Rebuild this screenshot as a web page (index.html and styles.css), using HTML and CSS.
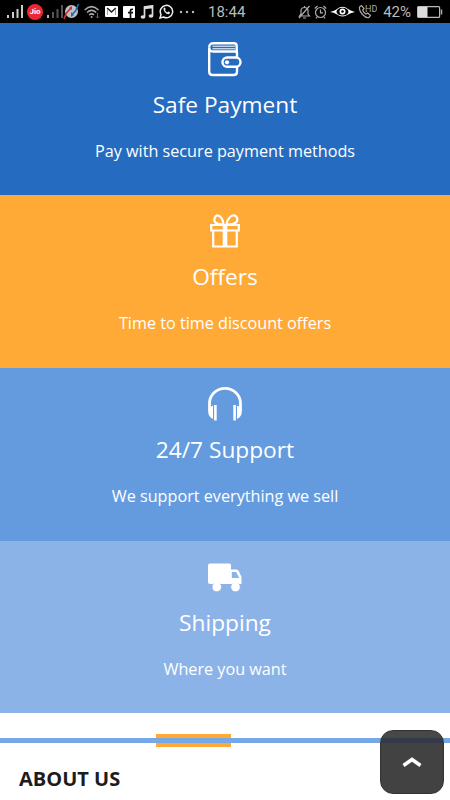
FILE: index.html
```html
<!DOCTYPE html>
<html lang="en">
<head>
    <meta charset="UTF-8">
    <meta name="viewport" content="width=device-width, initial-scale=1.0">
    <title>About Us</title>
    <link rel="stylesheet" href="styles.css">
</head>
<body>
    <header class="status-bar">
        <div class="status-left">
            <svg class="signal" width="17" height="13" viewBox="0 0 17 13"><path fill="#ccc" d="M0 10h2v3H0zM5 7h2v6H5zM9.500 4h2v9h-2zM14 0h2v13h-2z"/></svg>
            <span class="carrier">Jio</span>
            <svg class="signal" width="17" height="13" viewBox="0 0 17 13"><path fill="#bbb" d="M0 10h2v3H0z"/><path fill="#555" d="M5 7h2v6H5zM9.500 4h2v9h-2zM14 0h2v13h-2z"/></svg>
            <svg class="compass" width="17" height="17" viewBox="0 0 17 17"><circle cx="8.500" cy="8.500" r="6.500" fill="#bdc1c4"/><path d="M1 16l2.500-6L8 5" fill="none" stroke="#d82b2b" stroke-width="1.600"/><path d="M6 5l3-2v4z" fill="#d82b2b"/><path d="M8.500 12l4-4L15.500 1" fill="none" stroke="#2667ad" stroke-width="1.600"/><path d="M8 9v5l3-2z" fill="#2667ad"/></svg>
            <svg width="16" height="14" viewBox="0 0 16 14" fill="none" stroke="#aaa" stroke-width="1.500"><path d="M.7 5Q7.500-1.800 14.500 5M3 7.500q4.500-4.300 9.200 0M5.200 10q2.400-2.200 4.800 0"/><circle cx="7.600" cy="12" r="1" fill="#aaa" stroke="none"/><path d="M13.500 8v5M12 11.500l1.500 1.500 1.500-1.500" stroke="#666" stroke-width="1"/></svg>
            <svg width="13" height="11" viewBox="0 0 13 11"><rect width="13" height="11" rx="1" fill="#fff"/><path d="M2.200 2L6.500 6 10.800 2" fill="none" stroke="#222" stroke-width="1.500"/><path d="M2.500 9V3M10.500 9V3" stroke="#888" stroke-width=".8"/></svg>
            <svg width="12" height="12" viewBox="0 0 12 12"><rect width="12" height="12" rx="1" fill="#fff"/><path d="M7.500 12V5q0-2 2.500-1.700M5 6.700h5" fill="none" stroke="#111" stroke-width="1.700"/></svg>
            <svg width="14" height="14" viewBox="0 0 14 14"><path d="M4.500 11.500V2L12.500.8V10.500M4.500 3.500l8-1.200" fill="none" stroke="#ddd" stroke-width="1.700"/><ellipse cx="3" cy="12" rx="2.400" ry="1.700" fill="#ddd"/><ellipse cx="11" cy="11" rx="2.400" ry="1.700" fill="#ddd"/></svg>
            <svg width="15" height="15" viewBox="0 0 15 15"><path d="M1 14l1-3.500A6.200 6.200 0 1 1 4.500 13z" fill="none" stroke="#eee" stroke-width="1.500"/><path d="M4.700 4q1-1 1.600.3l.4 1-.7 1q.8 1.500 2.300 2.100l1-.9 1.700.8q.2 1.600-1.500 1.900Q7.500 10.200 5.700 8 3.900 5.600 4.700 4z" fill="#eee"/></svg>
            <svg class="more" width="16" height="4" viewBox="0 0 16 4" fill="#bbb"><circle cx="2" cy="2" r="1.200"/><circle cx="8" cy="2" r="1.200"/><circle cx="14" cy="2" r="1.200"/></svg>
        </div>
        <span class="clock">18:44</span>
        <div class="status-right">
            <svg width="13" height="14" viewBox="0 0 13 14" fill="none" stroke="#aaa" stroke-width="1.200"><path d="M1.500 11h10L10 9V5.500Q9.800 2.500 6.500 2.500T3 5.500V9zM6.500 2.500V1M5 13h3M1 13L11.500 1"/></svg>
            <svg width="13" height="14" viewBox="0 0 13 14" fill="none" stroke="#aaa" stroke-width="1.200"><circle cx="6.500" cy="7.500" r="5"/><path d="M6.500 4.500v3.300H9M.7 3.500L3.500 1M9.500 1l2.800 2.500M3 12l-1 1.300M10 12l1 1.300"/></svg>
            <svg width="25" height="13" viewBox="0 0 25 13"><path d="M0 7Q5.500 5.500 7 4q5.500-4.500 11 0 2 1.600 7 3-4 .5-7 2.500-5.500 4-11 0Q4 7.200 0 7z" fill="#fff"/><ellipse cx="12.500" cy="6.700" rx="6" ry="3.900" fill="#000"/><circle cx="12.500" cy="6.500" r="3" fill="#fff"/><circle cx="12.500" cy="6.500" r="1.300" fill="#000"/></svg>
            <svg width="19" height="15" viewBox="0 0 19 15"><path d="M1.500 3l2-1.500 2.500 3-1.300 1.700q1 2.500 3.300 3.800L9.800 9l2.700 2.500-1.800 2.200Q8 14.200 4.500 10.500 1 6.500 1.500 3z" fill="none" stroke="#aaa" stroke-width="1.200"/><text class="hd" x="7" y="7.500">HD</text></svg>
            <span class="percent">42%</span>
            <svg width="26" height="12" viewBox="0 0 26 12"><rect x=".6" y=".6" width="22" height="10.800" rx="1" fill="none" stroke="#bbb" stroke-width="1.200"/><path d="M1 1h9.500v10H1z" fill="#ddd"/><path d="M24.500 3.500v5" stroke="#aaa" stroke-width="1.500"/></svg>
        </div>
    </header>

    <main>
        <section class="service payment">
            <svg class="icon" viewBox="0 0 36 36" fill="none" stroke="#fff" stroke-width="2.400">
                <path d="M30 16.500V12q0-1.500-1.500-1.500H6Q2.500 10.500 2.200 6.500V30.500Q2.200 34 5.500 34H26.500Q30 34 30 31V25.500"/>
                <path d="M2.200 6.500Q2.200 2.200 6.500 2.200H27Q29.700 2.200 29.700 5V12"/>
                <path d="M5.500 5.200H28M5.500 7.800H28" stroke-width="1"/>
                <rect x="15.500" y="16.500" width="18" height="9.300" rx="4.600"/>
                <circle cx="20" cy="21.300" r="2.100" fill="#fff" stroke="none"/>
            </svg>
            <h2>Safe Payment</h2>
            <p>Pay with secure payment methods</p>
        </section>
        <section class="service offers">
            <svg class="icon" viewBox="0 0 36 36" fill="none" stroke="#fff" stroke-width="2.200">
                <path d="M4.200 12H31.800V17.500H4.200zM6.200 17.500V33.500H29.800V17.500"/>
                <path d="M16.500 11.500Q6 11.500 7.500 5.500 9 .8 13 3.500 16 6 16.500 11.500zM19.500 11.500Q32.500 11.500 30 4.500 27.500.5 23 4 20 7 19.500 11.500z"/>
                <path d="M18 11v22.500" stroke-width="4.600"/>
            </svg>
            <h2>Offers</h2>
            <p>Time to time discount offers</p>
        </section>
        <section class="service support">
            <svg class="icon" viewBox="0 0 36 36" fill="none" stroke="#fff">
                <path d="M2.500 25V17.300A15.500 15 0 0 1 33.500 17.300V25" stroke-width="2.800"/>
                <path d="M6 19.500V33Q1.200 30.500 1.200 26T6 19.500zM30 19.500V33Q34.800 30.500 34.800 26T30 19.500z" fill="#fff" stroke="none"/>
                <path d="M8.400 19V34.500M27.600 19V34.500" stroke-width="2.600"/>
                <path d="M6.500 19V34.500M29.500 19V34.500" stroke="#649bdf" stroke-width="1"/>
            </svg>
            <h2>24/7 Support</h2>
            <p>We support everything we sell</p>
        </section>
        <section class="service shipping">
            <svg class="icon" viewBox="0 0 36 36">
                <path d="M3 4.500H22.500Q24 4.500 24 6V10.500H29.500Q31 10.500 31.800 12L34.500 18V25H3Q1 25 1 23V6.500Q1 4.500 3 4.500z" fill="#fff"/>
                <path d="M24.800 13h4.400l3 6H24.800z" fill="#8bb3e8"/>
                <g fill="#fff" stroke="#8bb3e8" stroke-width=".8"><circle cx="9.800" cy="28" r="4.800"/><circle cx="28.500" cy="28" r="4.800"/></g>
                <path d="M5 20H33v4.700H5z" fill="#fff"/>
            </svg>
            <h2>Shipping</h2>
            <p>Where you want</p>
        </section>

        <section class="about">
            <div class="divider"><span class="divider-accent"></span></div>
            <h3>ABOUT US</h3>
        </section>
    </main>

    <a class="back-to-top" href="#" aria-label="Back to top">
        <svg width="20" height="12" viewBox="0 0 20 12"><path d="M1.500 9.500L10 3.500l8.500 6" fill="none" stroke="#fff" stroke-width="3.600"/></svg>
    </a>
</body>
</html>
```
FILE: styles.css
```css
* {
    box-sizing: border-box;
}
body {
    margin: 0;
    height: 800px;
    overflow: hidden;
    background-color: #fff;
    color: #fff;
    font-family: "Open Sans", "Noto Sans", sans-serif;
}
svg {
    display: block;
    flex-shrink: 0;
}

/* status bar */
.status-bar {
    display: flex;
    align-items: center;
    height: 23px;
    padding: 0 7px;
    background: #000;
    color: #bbb;
    font-family: Roboto, sans-serif;
    font-size: 16px;
}
.status-left {
    display: flex;
    align-items: center;
    gap: 5px;
    width: 201px;
}
.status-left .signal {
    margin-right: -2px;
}
.status-left .compass {
    margin: 0 -1px 0 -4px;
}
.carrier {
    width: 16px;
    height: 16px;
    margin-right: -1px;
    border-radius: 50%;
    background: #ec2634;
    color: #fff;
    font-size: 8px;
    font-weight: bold;
    line-height: 16px;
    text-align: center;
}
.clock {
    width: 37px;
    font-size: 15px;
}
.status-right {
    display: flex;
    align-items: center;
    gap: 3px;
    margin-left: auto;
}
.percent {
    margin: 0 3px;
    font-size: 15px;
}
.hd {
    fill: #aaa;
    font-size: 9px;
}

/* services */
.service {
    height: 172.5px;
    padding-top: 18px;
    text-align: center;
}
.payment {
    height: 172px;
    background: #256cc1;
}
.offers {
    height: 173px;
    background: #ffaa37;
}
.support {
    background: #649bdf;
}
.shipping {
    background: #8bb3e8;
}
.icon {
    width: 36px;
    height: 36px;
    margin: 0 auto;
}
.service h2 {
    margin: 12px 0 0;
    font-size: 22.7px;
    font-weight: normal;
    line-height: 32px;
}
.service p {
    margin: 18px 0 0;
    font-size: 16.2px;
    line-height: 24px;
}

/* about */
.about {
    padding-top: 21px;
}
.divider {
    display: flex;
    align-items: center;
    height: 13px;
    padding-left: 156px;
    background: linear-gradient(#76a7e6, #76a7e6) 0 4px / 100% 5px no-repeat;
}
.divider-accent {
    width: 75px;
    height: 13px;
    border: solid #ffaa37;
    border-width: 4px 0;
}
.about h3 {
    margin: 18px 0 0 19px;
    color: #1c1c1c;
    font-size: 20px;
    font-weight: bold;
    line-height: 28px;
}

.back-to-top {
    position: fixed;
    right: 6px;
    bottom: 6px;
    display: flex;
    align-items: center;
    justify-content: center;
    width: 64px;
    height: 64px;
    border: 1px solid #333;
    border-radius: 13px;
    background: linear-gradient(#484848 7px, #343b46 7px, #343b46 12px, #424242 12px);
}
```
